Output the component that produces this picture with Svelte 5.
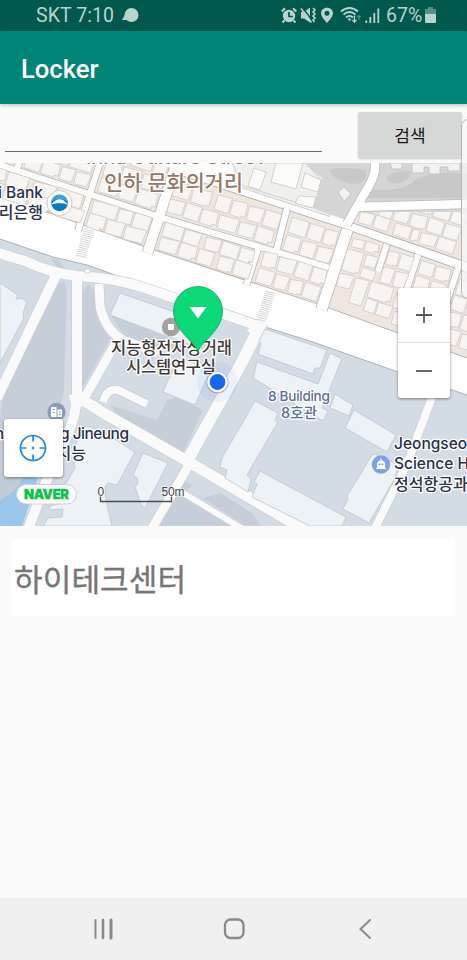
<script>
  // City blocks are laid out on a grid turned 18 degrees; s runs along the street, t across it.
  const rows = [
    { t: 5, h: 14, s: -6, w: [16, 22, 0, 24, 26] },
    { t: 19, h: 14, s: -10, w: [22, 24, 25, 0, 27] },
    { t: 5, h: 15, s: 101, w: [26, 15, 17] },
    { t: 19, h: 15, s: 101, w: [18, 18, 21] },
    { t: 5, h: 14, s: 176, w: [20, 17, 0, 16, 18, 15] },
    { t: 19, h: 15, s: 176, w: [20, 18, 16, 0, 16, 17] },
    { t: 1, h: 16, s: 279, w: [15, 18, 15, 15] },
    { t: 19, h: 15, s: 279, w: [17, 14, 14, 16] },
    { t: -17, h: 14, s: 24, w: [16, 18, 14, 15] },
    { t: -33, h: 15, s: 24, w: [22, 18, 23] },
    { t: -19, h: 16, s: 101, w: [20, 17, 21] },
    { t: -36, h: 16, s: 101, w: [17, 20, 22] },
    { t: -54, h: 16, s: 101, w: [22, 22, 14] },
    { t: -20, h: 15, s: 173, w: [16, 16, 17, 20, 17, 18] },
    { t: -38, h: 16, s: 173, w: [18, 20, 0, 15, 16, 16, 16] },
    { t: -21, h: 16, s: 295, w: [16, 15, 16] },
    { t: -39, h: 16, s: 295, w: [18, 15, 14] },
    { t: -39, h: 10, s: 359, w: [13, 14] },
    { t: -27, h: 23, s: 357, w: [18] },
    { t: -27, h: 12, s: 377, w: [12] },
    { t: -13, h: 10, s: 377, w: [14] },
    { t: -38, h: 15, s: 397, w: [12, 13] },
    { t: -21, h: 17, s: 397, w: [12, 13] },
    { t: -38, h: 14, s: 431, w: [15, 16] },
    { t: -22, h: 13, s: 431, w: [15, 16] },
    { t: -2, h: 15, s: 357, w: [15] },
    { t: -2, h: 27, s: 374, w: [14] },
    { t: -3, h: 17, s: 390, w: [24] },
    { t: 15, h: 13, s: 391, w: [11, 15] },
    { t: 0, h: 16, s: 417, w: [14, 15, 15] },
    { t: 18, h: 14, s: 421, w: [14, 14, 14] },
    { t: -32, h: 16, s: 473, w: [14, 16] },
    { t: -15, h: 15, s: 473, w: [14, 16] },
    { t: 1, h: 15, s: 473, w: [14, 16] },
    { t: 18, h: 16, s: 473, w: [18, 16] },
    { t: -66, h: 13, s: 395, w: [17, 8, 17, 18] },
    { t: -81, h: 14, s: 360, w: [14, 14, 16, 17, 16, 16] },
    { t: -67, h: 13, s: 358, w: [15, 15] },
    { t: -96, h: 13, s: 394, w: [15, 16, 17, 15] }
  ];
  const houses = rows.flatMap((r, k) => {
    let x = r.s;
    return r.w.flatMap((w, i) => {
      const at = x;
      if (w === 0) { x += 4; return []; }
      x += w + 1.2;
      const d = ((k * 3 + i * 5) % 4) * 0.6;
      const right = at + w, top = r.t, bottom = r.t + r.h;
      if ((k + i) % 3) return [`${at},${top + d} ${right},${top} ${right - d / 2},${bottom - d / 2} ${at + d / 2},${bottom}`];
      return [`${at},${top + d} ${right - 1},${top} ${right},${bottom - 3 + d} ${right - 4},${bottom - 3 + d} ${right - 4},${bottom} ${at + d / 2},${bottom}`];
    });
  });

  const lanes = [
    ['M-10 2L175 2L345 -2', 6], ['M18 -40V4', 6], ['M95 -50V40', 6],
    ['M168 -60V40', 10], ['M287 -46L290 0', 6], ['M272 0V40', 6],
    ['M351 -44V40', 11], ['M393 -42V-13', 6], ['M426 -42V0', 6], ['M468 -42V45', 6]
  ];

  const campusRoads = [
    ['M-5 252L25 261Q50 273 77 276Q115 278 145 288Q185 302 215 311L258 326', 10],
    ['M56 275L-3 398', 10],
    ['M77 280V392Q77 415 66 438L46 482L27 532', 10],
    ['M99 284L100 306Q105 330 123 340L158 353', 9],
    ['M115 344L85 397', 9],
    ['M70 400Q82 397 100 411L187 461L310 533', 11],
    ['M262 322L240 366L187 461', 12],
    ['M189 465L151 530', 9],
    ['M180 491L246 531', 6],
    ['M103 402Q107 388 118 390L147 404', 8],
    ['M440 376L407 464L372 534', 8]
  ];

  const campusBuildings = [
    '0,283 18,295 16,299 22,298 27,302 23,313 24,318 0,363',
    '120,293 206,323 196,347 110,315',
    '181,357 210,371 195,405 163,392 168,380',
    '82,430 87,426 100,430 135,452 117,485 108,483 105,487 106,500 112,526 43,526 48,518 62,517 63,509 50,510 49,506 66,502 62,490 75,468 73,450',
    '143,453 168,463 145,508 141,505 135,487 138,484 137,478 133,475',
    '255,401 278,413 275,420 278,422 247,475 251,479 248,492 225,478 227,470 220,467 222,458',
    '260,471 346,517 342,526 310,526 252,497 257,484 254,482',
    '265,329 327,350 320,368 315,368 313,374 258,354 261,343 259,341',
    '257,362 318,384 330,353 342,359 322,408 328,411 323,421 253,378',
    '335,394 353,405 349,416 330,408',
    '354,410 396,435 387,452 345,428',
    '372,455 375,454 398,465 395,478 369,523 343,509 348,499 347,496'
  ];

  const shade = [
    '59,283 64,280 67,290 64,390 58,420 0,420 3,395',
    '82,293 88,284 94,290 97,318 110,339 84,385 82,385',
    '109,313 166,337 190,350 150,347 125,336',
    '110,405 157,420 167,400 177,397 203,410 182,455 118,416',
    '0,420 60,420 50,456 34,478 0,500',
    '158,526 183,481 192,484 186,493 230,526',
    '183,486 203,498 220,493 252,513 261,526 246,526',
    '50,258 58,259 67,271 62,273'
  ];

  const crossings = [
    { x: 84, y: 229, n: 14 }, { x: 265, y: 291, n: 15 }
  ];
</script>

<div class="phone">
  <header class="status">
    <span class="clock">SKT 7:10</span>
    <svg class="bubble" width="17" height="16" viewBox="0 0 17 16"><circle cx="9.5" cy="7" r="7"/><path d="M4 5L0 12L7 12Z"/></svg>
    <svg class="signals" width="104" height="18" viewBox="281 7 104 18">
      <circle cx="289" cy="16" r="6.2"/>
      <path class="ln" d="M281.8 11.5L285 8.3M293 8.3L296.2 11.5M284.5 20.5L282.5 22.5M293.5 20.5L295.5 22.5" stroke-width="2"/>
      <path d="M289 12V16.5H293" fill="none" stroke="#00594c" stroke-width="1.7"/>
      <path d="M301 12H304L310 7.5V22.5L304 18.5H301Z"/>
      <path d="M302.500 7.500L313 21.500" stroke="#00594c" stroke-width="1.400"/>
      <path class="ln" d="M301 8.5L311.5 22.5" stroke-width="1.5"/>
      <path class="ln" d="M313 8L315 10L313 12L315 14L313 16L315 18L313 20L314.500 22" stroke-width="1.6"/>
      <path fill-rule="evenodd" d="M327 7.7C323.4 7.7 321 10 321 13.3C321 17 327 23 327 23S333 17 333 13.3C333 10 330.6 7.7 327 7.7ZM327 10.8A2.5 2.5 0 1 1 327 15.8A2.5 2.5 0 1 1 327 10.8Z"/>
      <path class="ln" d="M341 11.5Q349.5 4.5 358 11.5M343.5 14.5Q349.5 9.5 355.5 14.5M346 17.5Q349.5 14.5 353 17.5" stroke-width="1.9"/>
      <circle cx="349.5" cy="19.5" r="1.3"/>
      <path class="ln" d="M354.5 15.5V22M352.5 20L354.5 22L356.5 20" stroke-width="1.3"/>
      <path class="ln dim" d="M359 20V15M357.5 17L359 15.5L360.5 17" stroke-width="1.2"/>
      <path class="ln" d="M366.3 20.5V23M370.3 17V23M374.3 13V23M378.3 8.5V23" stroke-width="1.8"/>
    </svg>
    <span class="percent">67%</span>
    <svg class="battery" width="11" height="17" viewBox="0 0 11 17"><path class="dim" d="M3 0H8V2H11V7H0V2H3Z"/><path d="M0 7H11V15Q11 16 10 16H1Q0 16 0 15Z"/></svg>
  </header>

  <div class="appbar"><h1>Locker</h1></div>

  <div class="search">
    <div class="field"></div>
    <button>검색</button>
  </div>

  <main class="map">
    <svg class="canvas" width="467" height="363" viewBox="0 163 467 363">
      <rect y="163" width="467" height="363" fill="#fff"/>
      <g transform="translate(0 163) rotate(18)">
        <path d="M-20 -60H160L163 -44L347 -44Q410 -42 530 -39V42L350 36L170 35L-20 30Z" fill="#efe6df" stroke="#b5b0ac"/>
        <path d="M184 -90H310L330 -51H190Z" fill="#f2f0ed" stroke="#c5c2bd" stroke-width=".7"/>
        <path d="M350 -52V-70L370 -110H530V-49Z" fill="#efe6df" stroke="#b5afab"/>
        {#each lanes as [d, w]}
          <path {d} fill="none" stroke="#bbb6b3" stroke-width={w + 1.6}/>
        {/each}
        {#each lanes as [d, w]}
          <path {d} fill="none" stroke="#fff" stroke-width={w}/>
        {/each}
        {#each houses as points}
          <polygon {points} fill="#f8f4f2" stroke="#d3ccc7" stroke-width=".8"/>
        {/each}
      </g>
      <path d="M160 163H233L233 189L184 174L166 166Z" fill="#fff"/>
      <path d="M232 163H306L321 180L314 208L243 186Z" fill="#f0f0ec" stroke="#c5c5c0" stroke-width=".8"/>
      <path d="M254 168L266 172L260 190L248 186ZM276 163H303L296 189L271 182ZM305 173L321 180L318 192L301 187ZM299 196L316 197L313 208L295 203Z" fill="#fcfbf9" stroke="#c8c7c2" stroke-width=".8"/>
      <path d="M304 163H467V212H361L343 219L314 209L322 178Z" fill="#d5d5d5"/>
      <path d="M330 170Q340 166 366 170Q368 184 353 184Q332 180 330 170ZM387 176Q398 169 411 171Q411 181 397 183Q385 183 387 176ZM370 190Q405 192 415 180Q435 170 467 174V198H365Z" fill="#c8c8c8"/>
      <path d="M390 163H402V169H392ZM412 163H460V171H448V167H440V174H429V167H424V173H412ZM338 192L344 187L351 194L344 201Z" fill="#f2f2f2" stroke="#bdbdbd" stroke-width=".8"/>
      <path d="M375 160V170Q374 179 363 196L347 224M357 207L467 204" fill="none" stroke="#b8b8b8" stroke-width="10"/>
      <path d="M375 160V170Q374 179 363 196L347 224M355 207L470 204" fill="none" stroke="#fff" stroke-width="8.500"/>
      <g stroke="#d5d5d5" stroke-width="1">
        {#each crossings as c}
          {#each Array(c.n) as _, i}
            <path d={`M${c.x - i * 0.62} ${c.y + i * 2}l10 2.4`}/>
          {/each}
        {/each}
      </g>

      <path d="M0 239L53 257L87 265L160 291L252 323L310 341L398 372L467 395V526H0Z" fill="#d3dce5"/>
      <path d="M0 239L53 257L87 265L160 291L252 323M262 326L310 341L398 372L467 395" fill="none" stroke="#a9b0b7"/>
      {#each shade as points}<polygon {points} fill="#c6cfd9"/>{/each}
      <path d="M0 478H38L22 526H0Z" fill="#9bc5e9"/>
      <path d="M0 478H23Q18 491 0 500Z" fill="#c1ccd6"/>
      {#each campusRoads as [d, w]}<path {d} fill="none" stroke="#c6ccd2" stroke-width={w + 1.3}/>{/each}
      {#each campusRoads as [d, w]}<path {d} fill="none" stroke="#fafafa" stroke-width={w}/>{/each}
      <path d="M253 322L263 325L257 337L247 331Z" fill="#fafafa"/>
      {#each campusBuildings as points}<polygon {points} fill="#edf2f6" stroke="#c0c8d0" stroke-width=".9"/>{/each}
      <path d="M85 269H90V273H85Z" fill="#fff" stroke="#c0c7ce" stroke-width=".7"/>

      <g class="label street">
        <text x="86" y="164" textLength="177" font-size="20">Inha Culture Street</text>
        <text x="104" y="190" textLength="139" font-size="21">인하 문화의거리</text>
      </g>
      <g class="label poi">
        <text x="43" y="198" text-anchor="end" font-size="15.5">Woori Bank</text>
        <text x="43" y="218" text-anchor="end" font-size="16">우리은행</text>
      </g>
      <circle cx="59.5" cy="203" r="12.5" fill="#fff" stroke="#c9c9c9"/>
      <circle cx="59.5" cy="203" r="8.3" fill="#0878c4"/>
      <path d="M51.3 201.5A8.3 8.3 0 0 1 67.7 201.5Q59.5 196 51.3 201.5Z" fill="#36a5df"/>
      <path d="M51.2 204.500Q59.5 194 67.8 204.500Q59.5 201.500 51.2 204.500Z" fill="#fff"/>

      <circle cx="171" cy="327" r="9.2" fill="#a6a19e"/><rect x="168" y="324" width="6" height="6" rx="1" fill="#fff"/>
      <g class="label lab">
        <text x="111" y="354" textLength="121" font-size="16.5">지능형전자상거래</text>
        <text x="126" y="373" textLength="90" font-size="16.5">시스템연구실</text>
      </g>
      <g class="label hall">
        <text x="268" y="401" textLength="62" font-size="13.7">8 Building</text>
        <text x="281" y="418" textLength="36" font-size="14.5">8호관</text>
      </g>
      <circle cx="56.5" cy="412" r="9.2" fill="#8a9ab9"/>
      <path fill-rule="evenodd" d="M51 407H56.5V417H51ZM52.5 409H55V410H52.5ZM52.5 412H55V413H52.5ZM57.5 409.5H62V417H57.5ZM58.8 411.5H60.8V412.5H58.8ZM58.8 414H60.8V415H58.8Z" fill="#fff"/>
      <g class="label poi">
        <text x="129" y="439" text-anchor="end" textLength="143" font-size="15.5">Engineering Jineung</text>
        <text x="86" y="459" text-anchor="end" font-size="16">연구원지능</text>
        <text x="394" y="449" font-size="15.5">Jeongseok</text>
        <text x="394" y="469" font-size="15.5">Science Hall</text>
        <text x="394" y="490" font-size="16">정석항공과학관</text>
      </g>
      <circle cx="381" cy="464.5" r="9.3" fill="#809fe9"/>
      <path fill-rule="evenodd" d="M376 469V468H377V463Q377.5 461 380.3 460.5V458.5H381.7V460.5Q384.5 461 385 463V468H386V469ZM378.5 463.5V465H380.5V463.5ZM381.5 463.5V465H383.5V463.5Z" fill="#fff"/>

      <circle cx="217.5" cy="382" r="20" fill="#3b72ff" opacity=".07"/>
      <path d="M198 352C195 341 173.5 331 173.5 311A24.5 24.5 0 0 1 222.5 311C222.5 331 201 341 198 352Z" fill="#0bd978" stroke="#10a762" stroke-width=".8"/>
      <path d="M189.5 307H206.5L198 318.5Z" fill="#fff"/>
      <circle cx="217.5" cy="382.5" r="11" fill="#174ba0" opacity=".35"/>
      <circle cx="217.5" cy="382" r="10.3" fill="#fff"/>
      <circle cx="217.5" cy="382" r="7.9" fill="#1767ed"/>

      <rect x="16.5" y="484.5" width="60" height="19.5" rx="9.7" fill="#fff" stroke="#c8d0d8"/>
      <text class="naver" x="24" y="499" textLength="45">NAVER</text>
      <path d="M100.5 496V501.5H171.5V496" fill="none" stroke="#4a4d50" stroke-width="1.3"/>
      <g class="scale"><text x="97.5" y="496">0</text><text x="161.5" y="496" textLength="23">50m</text></g>
    </svg>

    <div class="locate">
      <svg width="30" height="30" viewBox="0 0 30 30" fill="none" stroke="#2389dc" stroke-width="1.7"><circle cx="15" cy="15" r="12.5"/><path d="M15 2.5V8.5M15 21.5V27.5M2.5 15H8.5M21.5 15H27.5"/><circle cx="15" cy="15" r="1" fill="#2389dc" stroke-width="1"/></svg>
    </div>
    <div class="zoom">
      <div><svg width="18" height="18"><path d="M1 9H17M9 1V17"/></svg></div>
      <div><svg width="18" height="18"><path d="M1 9H17"/></svg></div>
    </div>
  </main>

  <section class="result">하이테크센터</section>

  <nav>
    <svg width="22" height="22" viewBox="0 0 22 22"><path d="M2.5 2V20" stroke-width="2"/><path d="M10 2V20" stroke-width="2.5"/><path d="M18 2V20" stroke-width="3"/></svg>
    <svg width="22" height="22" viewBox="0 0 22 22"><rect x="2" y="1.500" width="18.5" height="18.5" rx="5.5" stroke-width="2.3"/></svg>
    <svg width="22" height="22" viewBox="0 0 22 22"><path d="M17 2L7.5 11L17 20" stroke-width="2"/></svg>
  </nav>
  <div class="edge"></div>
</div>

<style>
  :global(body) { margin: 0; }
  .phone { position: relative; width: 467px; height: 960px; overflow: hidden; display: flex; flex-direction: column; background: #fafafa; font-family: Roboto, "Noto Sans CJK KR", sans-serif; }
  svg { display: block; flex: none; }
  .status { height: 31px; flex: none; box-sizing: border-box; padding-left: 36px; display: flex; align-items: center; background: #00594c; color: #b9d3cf; fill: #b9d3cf; font-size: 19.5px; line-height: 33px; }
  .clock { width: 78px; white-space: nowrap; letter-spacing: .08px; }
  .bubble { margin-left: 8px; }
  .signals { margin-left: 142px; }
  .percent { width: 36px; margin-left: 1px; white-space: nowrap; }
  .battery { margin-left: 3px; }
  .ln { fill: none; stroke: #b9d3cf; }
  .dim { opacity: .45; }
  .appbar { height: 73px; flex: none; background: #008577; display: flex; align-items: center; padding-left: 21px; box-shadow: 0 1px 4px #0004; z-index: 1; }
  h1 { margin: 2px 0 0; color: #fff; font-size: 25.6px; font-weight: 500; line-height: 30px; }
  .search { height: 59px; flex: none; display: flex; padding: 0 5px; box-sizing: border-box; }
  .field { width: 317px; height: 47px; border-bottom: 1px solid #6b6b6b; }
  button { width: 104px; height: 46px; margin: 7.500px 0 0 36px; padding: 0 0 1px; border: 0; border-radius: 2px; background: #d6d8d7; box-shadow: 0 1px 2px #0003; color: #161616; font: 400 17px "Noto Sans CJK KR", sans-serif; }
  .map { height: 363px; flex: none; position: relative; }
  .label { paint-order: stroke; stroke: #fff; stroke-width: 2.5px; stroke-linejoin: round; font-family: Inter, "Noto Sans CJK KR", sans-serif; font-weight: 500; }
  .street { fill: #927a67; }
  .poi { fill: #26304a; }
  .lab { fill: #403a37; }
  .hall { fill: #5c6b99; }
  .naver { font: 900 13px Inter, sans-serif; fill: #0bc34a; stroke: #0bc34a; stroke-width: .3px; }
  .scale { font: 12px "Liberation Sans", sans-serif; fill: #404347; paint-order: stroke; stroke: #fffa; stroke-width: 1.5px; }
  .locate { position: absolute; left: 4px; top: 256px; width: 59px; height: 58px; border-radius: 3px; background: #fff; box-shadow: 0 1px 3px #0007; display: grid; place-items: center; }
  .locate svg { margin-right: 1px; }
  .zoom { position: absolute; left: 398px; top: 125px; width: 52px; height: 110px; border-radius: 3px; background: #fff; box-shadow: 0 1px 3px #0007; display: grid; grid-template-rows: 54px 56px; }
  .zoom div { display: grid; place-items: center; }
  .zoom div + div { border-top: 1px solid #ddd; }
  .zoom path { stroke: #5b5b5b; stroke-width: 1.8; fill: none; }
  .result { height: 77px; flex: none; margin: 13px 12px 0; box-sizing: border-box; padding-left: 2px; background: #fff; color: #767676; font: 400 31.2px/77px "Noto Sans CJK KR", sans-serif; -webkit-text-stroke: .35px #767676; }
  nav { height: 62px; margin-top: auto; background: #f0f0f0; display: flex; justify-content: space-between; align-items: center; padding: 0 92px 0 93px; box-sizing: border-box; }
  nav svg { fill: none; stroke: #898989; stroke-linecap: round; }
  .edge { position: absolute; left: 461px; top: 119px; width: 12px; height: 178px; border: 1px solid #b5b5b5; border-radius: 7px; background: #f7f7f7bb; z-index: 2; }
</style>
